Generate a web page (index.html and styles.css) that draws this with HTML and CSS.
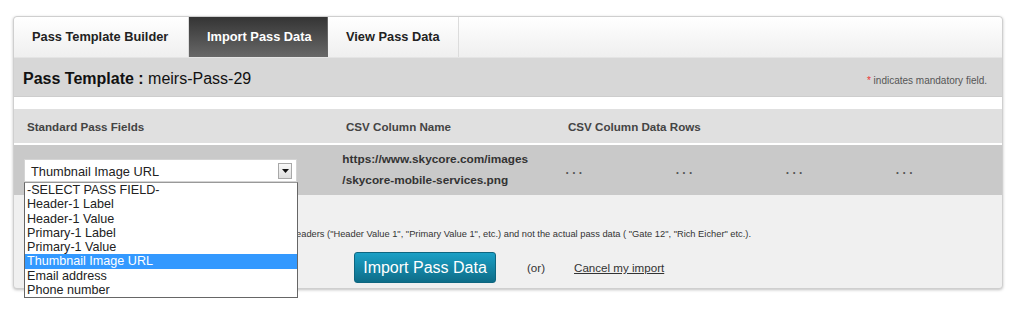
FILE: index.html
```html
<!DOCTYPE html>
<html>
<head>
<meta charset="utf-8">
<link rel="stylesheet" href="styles.css">
</head>
<body>
<div class="page">
  <div class="panel">
    <div class="tabs">
      <div class="tab">Pass Template Builder</div>
      <div class="tab active">Import Pass Data</div>
      <div class="tab">View Pass Data</div>
    </div>
    <div class="titlebar">
      <div class="title"><b>Pass Template :</b> meirs-Pass-29</div>
      <div class="mandatory"><span class="req">*</span> indicates mandatory field.</div>
    </div>
    <div class="spacer"></div>
    <div class="thead">
      <div class="hcol1">Standard Pass Fields</div>
      <div class="hcol2">CSV Column Name</div>
      <div class="hcol3">CSV Column Data Rows</div>
    </div>
    <div class="drow">
      <div class="dcol1">
        <div class="selectwrap">
          <div class="select">
            <span>Thumbnail Image URL</span>
            <span class="arrow"><svg width="7" height="4" viewBox="0 0 7 4"><path d="M0 0H7L3.5 4Z" fill="#111"/></svg></span>
          </div>
          <ul class="options">
            <li>-SELECT PASS FIELD-</li>
            <li>Header-1 Label</li>
            <li>Header-1 Value</li>
            <li>Primary-1 Label</li>
            <li>Primary-1 Value</li>
            <li class="sel">Thumbnail Image URL</li>
            <li>Email address</li>
            <li>Phone number</li>
          </ul>
        </div>
      </div>
      <div class="dcol2">https://www.skycore.com/images<br>/skycore-mobile-services.png</div>
      <div class="dots">. . .</div>
      <div class="dots">. . .</div>
      <div class="dots">. . .</div>
      <div class="dots">. . .</div>
    </div>
    <div class="bottom">
      <p class="note">Note: The first row of your CSV file must contain the column headers ("Header Value 1", "Primary Value 1", etc.) and not the actual pass data ( "Gate 12", "Rich Eicher" etc.).</p>
      <div class="actions">
        <button class="btn">Import Pass Data</button>
        <span class="or">(or)</span>
        <a class="cancel" href="#">Cancel my import</a>
      </div>
    </div>
  </div>
</div>
</body>
</html>
```
FILE: styles.css
```css
* { box-sizing: border-box; }
html, body { min-height: 310px; }
body {
  margin: 0;
  background: #fff;
  font-family: "Liberation Sans", Arial, sans-serif;
  color: #222;
}
.page {
  padding: 16px 21px 24px 13px;
}
.panel {
  position: relative;
  border: 1px solid #cfcfcf;
  border-radius: 4px;
  box-shadow: 0 1px 3px rgba(0,0,0,0.25);
  background: #f0f0f0;
}
.tabs {
  display: flex;
  height: 41px;
  background: linear-gradient(#ffffff, #efefef);
  border-radius: 4px 4px 0 0;
  border-bottom: 1px solid #e4e4e4;
}
.tab {
  padding: 0 18px;
  line-height: 40px;
  font-size: 12.8px;
  font-weight: bold;
  color: #222;
  border-right: 1px solid #dcdcdc;
  white-space: nowrap;
}
.tab:first-child { width: 175px; }
.tab:nth-child(2) { width: 139px; }
.tab:nth-child(3) { width: 131px; }
.tab.active {
  background: linear-gradient(#343434, #686868);
  color: #fff;
  border-right-color: #666;
}
.titlebar {
  height: 39px;
  background: #d7d7d7;
  display: flex;
  align-items: center;
  justify-content: space-between;
  padding: 3px 15px 0 9px;
  border-bottom: 1px solid #cdcdcd;
}
.title {
  font-size: 16px;
  color: #111;
}
.mandatory {
  font-size: 10px;
  color: #555;
  padding-top: 3px;
}
.req { color: #e33; }
.spacer {
  height: 12px;
  background: #fff;
}
.thead {
  display: flex;
  align-items: center;
  height: 36px;
  background: #e0e0e0;
  padding: 1px 0 0 13px;
  font-size: 11.6px;
  font-weight: bold;
  color: #444;
  border-bottom: 2px solid #fff;
}
.hcol1 { width: 319px; }
.hcol2 { width: 222px; }
.drow {
  display: flex;
  align-items: center;
  height: 50px;
  background: #c9c9c9;
  padding-left: 10px;
}
.dcol1 { width: 319px; padding-top: 1px; }
.dcol2 {
  width: 223px;
  font-size: 11.8px;
  font-weight: bold;
  color: #333;
  line-height: 21px;
  padding-left: 2px;
}
.dots {
  width: 111px;
  font-size: 12px;
  font-weight: bold;
  color: #555;
  padding: 0 0 1px 4px;
}
.selectwrap {
  position: relative;
  width: 273px;
}
.select {
  height: 23px;
  background: #fff;
  border: 1px solid #d4d4d4;
  display: flex;
  align-items: center;
  justify-content: space-between;
  padding: 1px 4px 0 6px;
  font-size: 12.8px;
  color: #222;
}
.arrow {
  width: 14px;
  height: 16px;
  border: 1px solid #a8a8a8;
  background: linear-gradient(#f8f8f8, #dedede);
  display: flex;
  align-items: center;
  justify-content: center;
}
.options {
  position: absolute;
  top: 23px;
  left: 0;
  width: 274px;
  margin: 0;
  padding: 0;
  list-style: none;
  background: #fff;
  border: 1px solid #666;
  border-top-color: #999;
  z-index: 5;
  font-size: 12.6px;
  color: #222;
}
.options li {
  height: 14.25px;
  line-height: 15px;
  padding-left: 2px;
  white-space: nowrap;
}
.options li.sel {
  background: #3399ff;
  color: #fff;
}
.bottom {
  height: 93px;
  padding-top: 32px;
  background: #f0f0f0;
  border-radius: 0 0 4px 4px;
}
.note {
  margin: 0 0 0 28px;
  font-size: 9.3px;
  color: #333;
  height: 12px;
  line-height: 14px;
  white-space: nowrap;
}
.actions {
  display: flex;
  align-items: center;
  margin-top: 13px;
  padding-left: 340px;
  font-size: 11.6px;
  color: #333;
}
.btn {
  width: 142px;
  height: 31px;
  border: 1px solid #0e6680;
  border-radius: 3px;
  background: linear-gradient(#1ba0c6, #0e6d88);
  color: #fff;
  font-family: "Liberation Sans", Arial, sans-serif;
  font-size: 16px;
  padding: 0;
}
.or { margin-left: 31px; }
.cancel {
  margin-left: 29px;
  color: #333;
  text-decoration: underline;
}
```
